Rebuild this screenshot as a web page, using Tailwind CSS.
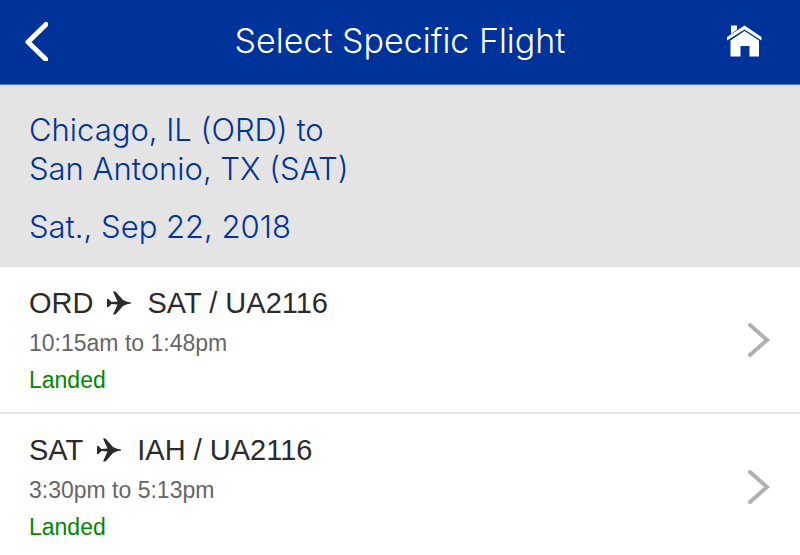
<!DOCTYPE html>
<html lang="en">
<head>
  <meta charset="UTF-8">
  <meta name="viewport" content="width=device-width, initial-scale=1.0">
  <title>Select Specific Flight</title>
  <script src="https://cdn.jsdelivr.net/npm/@tailwindcss/browser@4"></script>
</head>
<body class="bg-white min-h-screen font-['Liberation_Sans',Arial,sans-serif]">

  <!-- Header -->
  <header class="h-[85px] px-6 pb-0.5 flex items-center justify-between bg-[#003399] border-b border-[#5a78b8] text-white">
    <button type="button" aria-label="Back" class="w-[50px] h-10">
      <svg class="w-6 h-10" viewBox="0 0 24 40" fill="none" stroke="currentColor" stroke-width="5" stroke-linecap="round" stroke-linejoin="round">
        <path d="M22 3.500L4 21L22 38.500" />
      </svg>
    </button>
    <h1 class="text-[34px] leading-10 font-light font-[Inter,sans-serif]">Select Specific Flight</h1>
    <a href="#" aria-label="Home" class="w-[50px] h-8">
      <svg class="w-9 h-8" viewBox="0 0 36 32" fill="currentColor">
        <path d="M5 0.500H11V4.500L5 9Z" />
        <path d="M18.500 0.500L35.500 12V15.500L18.500 4.500L1 15.500V12Z" />
        <path d="M18.500 6L33 15.500V31.500H23.500V21H14.500V31.500H4.500V15.500Z" />
      </svg>
    </a>
  </header>

  <!-- Route summary -->
  <section class="px-[29px] pt-[25px] pb-[21px] bg-[#e4e4e4] text-[#003399] text-[31px] leading-[39px] font-light font-[Inter,sans-serif]">
    <h2>Chicago, IL (ORD) to<br>San Antonio, TX (SAT)</h2>
    <p class="mt-[19px]">Sat., Sep 22, 2018</p>
  </section>

  <!-- Flights -->
  <ul>
    <li class="border-b-2 border-[#e4e4e4]">
      <a href="#" class="flex items-center justify-between px-[29px] py-4">
        <div>
          <h3 class="flex items-center text-[29px] leading-10 text-[#2b2b2b]">
            ORD
            <svg class="w-6 h-6 ml-3.5 mr-4" viewBox="0 0 24 24" fill="currentColor" role="img" aria-label="to">
              <path d="M0 8H1.500L4.500 11L10.500 10.500L6 0.500H8.500L16 9L20 10.800L24 11.500V12.500L20 13.200L16 15L8.500 23.500H6L10.500 13.500L4.500 13L1.500 16H0Z" />
            </svg>
            SAT / UA2116
          </h3>
          <p class="text-[23px] leading-10 text-[#666666]">10:15am to 1:48pm</p>
          <p class="text-[23px] leading-8 pt-px text-[#008800]">Landed</p>
        </div>
        <svg class="w-6 h-9 text-[#b0b0b0]" viewBox="0 0 24 36" fill="none" stroke="currentColor" stroke-width="4" stroke-linecap="round" stroke-linejoin="miter">
          <path d="M3 3L20 18L3 33" />
        </svg>
      </a>
    </li>
    <li>
      <a href="#" class="flex items-center justify-between px-[29px] py-4">
        <div>
          <h3 class="flex items-center text-[29px] leading-10 text-[#2b2b2b]">
            SAT
            <svg class="w-6 h-6 ml-3.5 mr-4" viewBox="0 0 24 24" fill="currentColor" role="img" aria-label="to">
              <path d="M0 8H1.500L4.500 11L10.500 10.500L6 0.500H8.500L16 9L20 10.800L24 11.500V12.500L20 13.200L16 15L8.500 23.500H6L10.500 13.500L4.500 13L1.500 16H0Z" />
            </svg>
            IAH / UA2116
          </h3>
          <p class="text-[23px] leading-10 text-[#666666]">3:30pm to 5:13pm</p>
          <p class="text-[23px] leading-8 pt-px text-[#008800]">Landed</p>
        </div>
        <svg class="w-6 h-9 text-[#b0b0b0]" viewBox="0 0 24 36" fill="none" stroke="currentColor" stroke-width="4" stroke-linecap="round" stroke-linejoin="miter">
          <path d="M3 3L20 18L3 33" />
        </svg>
      </a>
    </li>
  </ul>

</body>
</html>
